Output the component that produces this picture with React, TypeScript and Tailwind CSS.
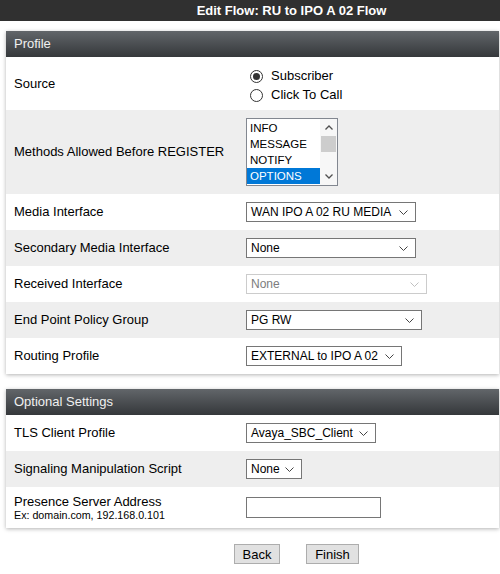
import React from "react";

function Chevron({ disabled }: { disabled?: boolean }) {
  return (
    <svg width="9" height="5" viewBox="0 0 9 5" className="shrink-0">
      <path d="M0.5 0.5 L4.5 4.5 L8.5 0.5" fill="none" stroke={disabled ? "#c0c0c0" : "#444"} strokeWidth="1" />
    </svg>
  );
}

function SelectBox({ value, w, disabled }: { value: string; w: string; disabled?: boolean }) {
  return (
    <div
      className={`${w} flex h-[20px] items-center justify-between border bg-white pl-[4px] pr-[7px] text-[12px] leading-none ${
        disabled ? "border-[#cccccc] text-[#7d7d7d]" : "border-[#767676] text-black"
      }`}
    >
      <span className="whitespace-nowrap">{value}</span>
      <Chevron disabled={disabled} />
    </div>
  );
}

function Radio({ checked, label }: { checked?: boolean; label: string }) {
  return (
    <div className="flex h-[19px] items-center">
      <span className="ml-[4px] flex h-[13px] w-[13px] items-center justify-center rounded-full border border-[#333] bg-white">
        {checked && <span className="h-[7px] w-[7px] rounded-full bg-[#333]" />}
      </span>
      <span className="ml-[8px] text-[13px] text-black">{label}</span>
    </div>
  );
}

function Row({ label, children, h, grey }: { label: React.ReactNode; children: React.ReactNode; h: string; grey?: boolean }) {
  return (
    <div className={`flex items-center ${h} ${grey ? "bg-[#eeeeee]" : "bg-white"}`}>
      <div className="w-[240px] shrink-0 pl-[8px] text-[13px] text-black">{label}</div>
      <div className="flex items-center">{children}</div>
    </div>
  );
}

function Header({ title }: { title: string }) {
  return (
    <div className="flex h-[26px] items-center bg-gradient-to-b from-[#62666a] to-[#35383b] pl-[8px] text-[13px] text-[#f0f0f0]">
      {title}
    </div>
  );
}

function ListBox() {
  const items = ["INFO", "MESSAGE", "NOTIFY", "OPTIONS"];
  return (
    <div className="flex h-[68px] w-[92px] border border-[#828790] bg-white">
      <div className="flex w-[73px] flex-col pt-[1px]">
        {items.map((it) => (
          <div
            key={it}
            className={`flex h-[16px] items-center pl-[3px] pt-[1px] text-[11.5px] leading-none ${
              it === "OPTIONS" ? "bg-[#0078d7] text-white" : "text-black"
            }`}
          >
            {it}
          </div>
        ))}
      </div>
      <div className="flex w-[17px] flex-col items-center bg-[#f7f7f7]">
        <div className="flex h-[17px] items-center justify-center">
          <svg width="8" height="5" viewBox="0 0 8 5">
            <path d="M0.5 4.5 L4 1 L7.5 4.5" fill="none" stroke="#505050" strokeWidth="1.3" />
          </svg>
        </div>
        <div className="h-[16px] w-[15px] bg-[#cdcdcd]" />
        <div className="flex-1" />
        <div className="flex h-[17px] items-center justify-center">
          <svg width="8" height="5" viewBox="0 0 8 5">
            <path d="M0.5 0.5 L4 4 L7.5 0.5" fill="none" stroke="#505050" strokeWidth="1.3" />
          </svg>
        </div>
      </div>
    </div>
  );
}

export default function App() {
  return (
    <div className="h-[574px] w-[500px] overflow-hidden bg-white font-['Liberation_Sans',Arial,sans-serif]">
      <div className="h-[21px] w-[583px] bg-[#303030] text-center text-[13px] font-bold leading-[21px] text-white">
        Edit Flow: RU to IPO A 02 Flow
      </div>

      <div className="ml-[6px] mr-[1px] mt-[10px] shadow-[0_1px_4px_rgba(0,0,0,0.3)]">
        <Header title="Profile" />
        <Row label="Source" h="h-[53px]">
          <div className="flex flex-col pt-[4px]">
            <Radio checked label="Subscriber" />
            <Radio label="Click To Call" />
          </div>
        </Row>
        <Row label="Methods Allowed Before REGISTER" h="h-[84px]" grey>
          <ListBox />
        </Row>
        <Row label="Media Interface" h="h-[36px]">
          <SelectBox value="WAN IPO A 02 RU MEDIA" w="w-[170px]" />
        </Row>
        <Row label="Secondary Media Interface" h="h-[36px]" grey>
          <SelectBox value="None" w="w-[170px]" />
        </Row>
        <Row label="Received Interface" h="h-[36px]">
          <SelectBox value="None" w="w-[181px]" disabled />
        </Row>
        <Row label="End Point Policy Group" h="h-[36px]" grey>
          <SelectBox value="PG RW" w="w-[176px]" />
        </Row>
        <Row label="Routing Profile" h="h-[36px]">
          <SelectBox value="EXTERNAL to IPO A 02" w="w-[156px]" />
        </Row>
      </div>

      <div className="ml-[6px] mr-[1px] mt-[15px] shadow-[0_1px_4px_rgba(0,0,0,0.3)]">
        <Header title="Optional Settings" />
        <Row label="TLS Client Profile" h="h-[36px]">
          <SelectBox value="Avaya_SBC_Client" w="w-[130px]" />
        </Row>
        <Row label="Signaling Manipulation Script" h="h-[36px]" grey>
          <SelectBox value="None" w="w-[56px]" />
        </Row>
        <Row
          label={
            <div className="flex flex-col">
              <span className="leading-[14px]">Presence Server Address</span>
              <span className="text-[10.7px] leading-[12px]">Ex: domain.com, 192.168.0.101</span>
            </div>
          }
          h="h-[41px]"
        >
          <div className="h-[21px] w-[135px] border border-[#767676] bg-white" />
        </Row>
      </div>

      <div className="mt-[16px] flex pl-[234px]">
        <button className="h-[20px] w-[46px] border border-[#adadad] bg-[#e1e1e1] text-[13px] leading-none text-black">
          Back
        </button>
        <button className="ml-[26px] h-[20px] w-[53px] border border-[#adadad] bg-[#e1e1e1] text-[13px] leading-none text-black">
          Finish
        </button>
      </div>
    </div>
  );
}
